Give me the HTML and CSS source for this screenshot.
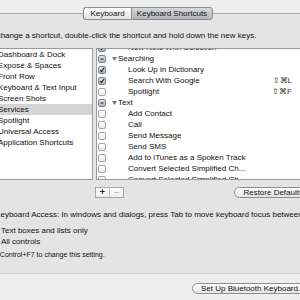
FILE: index.html
```html
<!DOCTYPE html>
<html lang="en">
<head>
    <meta charset="UTF-8">
    <title>Keyboard Shortcuts</title>
    <link rel="stylesheet" href="styles.css">
</head>
<body>
    <div class="page">
        <div class="tabbox">
            <div class="tabs">
                <div class="tab">Keyboard</div>
                <div class="tab tab-active">Keyboard Shortcuts</div>
            </div>

            <p class="hint">To change a shortcut, double-click the shortcut and hold down the new keys.</p>

            <div class="lists">
                <div class="cat-list">
                    <div class="cat-item">Dashboard &amp; Dock</div>
                    <div class="cat-item">Exposé &amp; Spaces</div>
                    <div class="cat-item">Front Row</div>
                    <div class="cat-item">Keyboard &amp; Text Input</div>
                    <div class="cat-item">Screen Shots</div>
                    <div class="cat-item selected">Services</div>
                    <div class="cat-item">Spotlight</div>
                    <div class="cat-item">Universal Access</div>
                    <div class="cat-item">Application Shortcuts</div>
                </div>

                <div class="svc-list">
                    <div class="svc-rows">
                        <div class="svc-row">
                            <span class="check on"><svg viewBox="0 0 8 8"><path d="M1.5 4.2 L3.3 6.2 L6.8 1.2"/></svg></span>
                            <span class="svc-label">New Note With Selection</span>
                        </div>
                        <div class="svc-row">
                            <span class="check on"><svg viewBox="0 0 8 8"><path d="M2 4 H6"/></svg></span>
                            <svg class="disclosure" viewBox="0 0 5 4"><path d="M0 0 H5 L2.5 4 Z"/></svg>
                            <span class="group-label">Searching</span>
                        </div>
                        <div class="svc-row">
                            <span class="check on"><svg viewBox="0 0 8 8"><path d="M1.5 4.2 L3.3 6.2 L6.8 1.2"/></svg></span>
                            <span class="svc-label">Look Up in Dictionary</span>
                        </div>
                        <div class="svc-row">
                            <span class="check on"><svg viewBox="0 0 8 8"><path d="M1.5 4.2 L3.3 6.2 L6.8 1.2"/></svg></span>
                            <span class="svc-label">Search With Google</span>
                            <span class="keys">⇧⌘L</span>
                        </div>
                        <div class="svc-row">
                            <span class="check"></span>
                            <span class="svc-label">Spotlight</span>
                            <span class="keys">⇧⌘F</span>
                        </div>
                        <div class="svc-row">
                            <span class="check on"><svg viewBox="0 0 8 8"><path d="M2 4 H6"/></svg></span>
                            <svg class="disclosure" viewBox="0 0 5 4"><path d="M0 0 H5 L2.5 4 Z"/></svg>
                            <span class="group-label">Text</span>
                        </div>
                        <div class="svc-row"><span class="check"></span><span class="svc-label">Add Contact</span></div>
                        <div class="svc-row"><span class="check"></span><span class="svc-label">Call</span></div>
                        <div class="svc-row"><span class="check"></span><span class="svc-label">Send Message</span></div>
                        <div class="svc-row"><span class="check"></span><span class="svc-label">Send SMS</span></div>
                        <div class="svc-row"><span class="check"></span><span class="svc-label">Add to iTunes as a Spoken Track</span></div>
                        <div class="svc-row"><span class="check"></span><span class="svc-label">Convert Selected Simplified Ch...</span></div>
                        <div class="svc-row"><span class="check"></span><span class="svc-label">Convert Selected Simplified Ch...</span></div>
                    </div>
                </div>
            </div>

            <div class="list-actions">
                <div class="seg-buttons">
                    <span class="seg-btn">+</span>
                    <span class="seg-btn disabled">−</span>
                </div>
                <button class="pill restore">Restore Defaults</button>
            </div>

            <p class="access">Full Keyboard Access: In windows and dialogs, press Tab to move keyboard focus between:</p>

            <div class="radios">
                <div class="radio-row"><span class="radio checked"></span>Text boxes and lists only</div>
                <div class="radio-row"><span class="radio"></span>All controls</div>
            </div>

            <p class="note">Press Control+F7 to change this setting.</p>
        </div>

        <div class="footer">
            <button class="pill">Set Up Bluetooth Keyboard...</button>
        </div>
    </div>
</body>
</html>
```

FILE: styles.css
```css
body {
    margin: 0;
    width: 300px;
    height: 300px;
    overflow: hidden;
    background: #eeeeee;
    font-family: "Liberation Sans", Arial, sans-serif;
    font-size: 8px;
    color: #111;
}

.page {
    padding-top: 13px;
}

.tabbox {
    margin-left: -30px;
    width: 360px;
    box-sizing: border-box;
    background: #e4e4e4;
    border-top: 1px solid #a9a9a9;
    border-bottom: 1px solid #d0d0d0;
    padding-bottom: 14px;
}

.tabs {
    display: flex;
    justify-content: center;
    margin-top: -7px;
    padding-right: 4px;
}

.tab {
    height: 13px;
    line-height: 11px;
    width: 48px;
    box-sizing: border-box;
    text-align: center;
    border: 1px solid #8d8d8d;
    border-right: none;
    border-radius: 3px 0 0 3px;
    background: linear-gradient(#ffffff, #e4e4e4);
}

.tab-active {
    width: 82px;
    border-right: 1px solid #8d8d8d;
    border-radius: 0 3px 3px 0;
    background: linear-gradient(#d4d7dc, #b3b7be);
}

.hint {
    margin: 11px 0 0;
    padding-left: 16px;
    line-height: 10px;
    white-space: nowrap;
}

.lists {
    display: flex;
    gap: 3px;
    margin: 7px 0 0 20px;
    height: 132px;
}

.cat-list {
    width: 103px;
    box-sizing: border-box;
    border: 1px solid #9b9b9b;
    background: #fff;
}

.cat-item {
    height: 11px;
    line-height: 11px;
    padding-left: 7px;
    white-space: nowrap;
}

.cat-item.selected {
    background: #d4d4d4;
}

.svc-list {
    width: 216px;
    box-sizing: border-box;
    border: 1px solid #9b9b9b;
    background: #fff;
    overflow: hidden;
}

.svc-rows {
    margin-top: -7px;
}

.svc-row {
    display: flex;
    align-items: center;
    height: 11px;
    padding: 0 19px 0 1px;
    white-space: nowrap;
}

.check {
    flex: none;
    width: 8px;
    height: 8px;
    box-sizing: border-box;
    border: 1px solid #a4a4a4;
    border-radius: 2px;
    background: linear-gradient(#ffffff, #ececec);
}

.check.on {
    border-color: #7e8591;
    background: linear-gradient(#dfe2e7, #aeb4be);
}

.check svg {
    display: block;
    width: 6px;
    height: 6px;
    fill: none;
    stroke: #222;
    stroke-width: 1.4;
}

.disclosure {
    width: 5px;
    height: 4px;
    margin-left: 6px;
    fill: #777;
}

.group-label {
    margin-left: 1px;
}

.svc-label {
    margin-left: 22px;
    flex: 1;
}

.keys {
    color: #333;
}

.list-actions {
    display: flex;
    align-items: center;
    width: 322px;
    height: 11px;
    margin: 7px 0 0 20px;
}

.seg-buttons {
    display: flex;
    margin-left: 105px;
    height: 11px;
    box-sizing: border-box;
    border: 1px solid #a6a6a6;
    background: linear-gradient(#ffffff, #eeeeee);
}

.seg-btn {
    width: 13px;
    line-height: 9px;
    text-align: center;
    font-size: 9px;
    font-weight: bold;
    color: #222;
}

.seg-btn.disabled {
    border-left: 1px solid #c4c4c4;
    color: #9a9a9a;
    font-weight: normal;
}

.pill {
    height: 11px;
    padding: 0 8px;
    box-sizing: border-box;
    border: 1px solid #8e8e8e;
    border-radius: 6px;
    background: linear-gradient(#ffffff, #e6e6e6);
    font-family: "Liberation Sans", Arial, sans-serif;
    font-size: 8px;
    line-height: 9px;
    color: #111;
    white-space: nowrap;
}

.restore {
    margin-left: auto;
}

.access {
    margin: 12px 0 0;
    padding-left: 10px;
    line-height: 10px;
    white-space: nowrap;
}

.radios {
    margin-top: 5px;
    padding-left: 19px;
}

.radio-row {
    display: flex;
    align-items: center;
    gap: 4px;
    height: 11px;
    white-space: nowrap;
}

.radio {
    width: 8px;
    height: 8px;
    box-sizing: border-box;
    border: 1px solid #9a9a9a;
    border-radius: 50%;
    background: #fff;
}

.note {
    margin: 3px 0 0;
    padding-left: 10px;
    font-size: 7px;
    line-height: 9px;
    white-space: nowrap;
}

.footer {
    display: flex;
    margin-top: 9px;
    padding-left: 192px;
}
```
